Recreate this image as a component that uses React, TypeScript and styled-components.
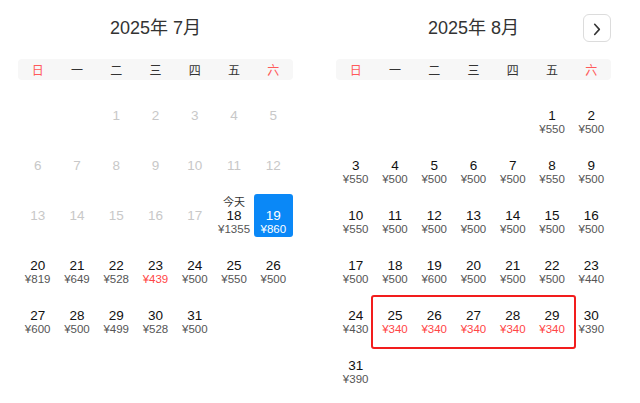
import React from "react";
import styled, { createGlobalStyle } from "styled-components";

const Global = createGlobalStyle`
  html, body { margin: 0; padding: 0; background: #fff; }
  body { font-family: "Liberation Sans", "Noto Sans CJK SC", sans-serif; color: #222; }
`;

const Page = styled.div`
  display: flex;
  gap: 43px;
  padding: 12px 29px 0 18px;
  width: 640px;
  height: 403px;
  box-sizing: border-box;
`;

const Panel = styled.section`
  width: 275px;
  display: flex;
  flex-direction: column;
`;

const Header = styled.div`
  display: grid;
  grid-template-columns: 28px 1fr 28px;
  align-items: center;
  height: 29px;
`;

const Title = styled.h2`
  grid-column: 2;
  margin: 0;
  text-align: center;
  font-family: "Liberation Sans", "Noto Sans CJK SC", sans-serif;
  font-weight: 400;
  font-size: 18px;
  color: #333;
  line-height: 29px;
  padding-top: 2px;
`;

const NextButton = styled.button`
  grid-column: 3;
  width: 28px;
  height: 28px;
  padding: 0;
  border: 1px solid #dcdcdc;
  border-radius: 6px;
  background: #fff;
  display: flex;
  align-items: center;
  justify-content: center;
`;

const WeekBar = styled.div`
  margin-top: 18px;
  height: 21px;
  background: #f7f7f7;
  border-radius: 4px;
  display: grid;
  grid-template-columns: repeat(7, 1fr);
  align-items: center;
`;

const WeekDay = styled.span<{ $weekend: boolean }>`
  text-align: center;
  font-size: 12px;
  font-family: "Noto Sans CJK SC", sans-serif;
  color: ${(p) => (p.$weekend ? "#ff5a5a" : "#333")};
  line-height: 21px;
`;

const Grid = styled.div`
  margin-top: 14px;
  display: grid;
  grid-template-columns: repeat(7, 1fr);
  grid-auto-rows: 43px;
  row-gap: 7px;
`;

const Cell = styled.div<{ $selected: boolean }>`
  display: flex;
  flex-direction: column;
  align-items: center;
  padding-top: 1px;
  box-sizing: border-box;
  border-radius: 3px;
  background: ${(p) => (p.$selected ? "#0a88f7" : "transparent")};
  color: ${(p) => (p.$selected ? "#fff" : "inherit")};
`;

const Label = styled.span`
  height: 12px;
  margin-bottom: 2px;
  line-height: 12px;
  font-size: 11px;
  font-family: "Noto Sans CJK SC", sans-serif;
  color: #333;
`;

const Num = styled.span<{ $past: boolean; $selected: boolean }>`
  height: 14px;
  line-height: 14px;
  font-size: 13.5px;
  color: ${(p) => (p.$selected ? "#fff" : p.$past ? "#c8c8c8" : "#111")};
`;

const Price = styled.span<{ $red: boolean; $selected: boolean }>`
  height: 13px;
  line-height: 13px;
  font-size: 11.5px;
  color: ${(p) => (p.$selected ? "#fff" : p.$red ? "#ff4545" : "#555")};
`;

const Highlight = styled.div`
  grid-row: 5;
  grid-column: 2 / 7;
  margin: 1px -4px -12px -4px;
  border: 2px solid #f21d1d;
  border-radius: 3px;
  pointer-events: none;
`;

type Day = {
  d: number;
  price?: number;
  red?: boolean;
  past?: boolean;
  today?: boolean;
  selected?: boolean;
};

const WEEK = ["日", "一", "二", "三", "四", "五", "六"];

const july: Day[] = [
  ...Array.from({ length: 17 }, (_, i) => ({ d: i + 1, past: true })),
  { d: 18, price: 1355, today: true },
  { d: 19, price: 860, selected: true },
  { d: 20, price: 819 },
  { d: 21, price: 649 },
  { d: 22, price: 528 },
  { d: 23, price: 439, red: true },
  { d: 24, price: 500 },
  { d: 25, price: 550 },
  { d: 26, price: 500 },
  { d: 27, price: 600 },
  { d: 28, price: 500 },
  { d: 29, price: 499 },
  { d: 30, price: 528 },
  { d: 31, price: 500 },
];

const augPrices = [
  550, 500, 550, 500, 500, 500, 500, 550, 500, 550, 500, 500, 500, 500, 500,
  500, 500, 500, 600, 500, 500, 500, 440, 430, 340, 340, 340, 340, 340, 390,
  390,
];
const august: Day[] = augPrices.map((p, i) => ({
  d: i + 1,
  price: p,
  red: i + 1 >= 25 && i + 1 <= 29,
}));

const Chevron = () => (
  <svg width="28" height="28" viewBox="0 0 28 28" fill="none">
    <polyline
      points="11.5,10 16.5,15.5 11.5,21"
      stroke="#333"
      strokeWidth="1.7"
      strokeLinecap="round"
      strokeLinejoin="round"
    />
  </svg>
);

function Month({
  title,
  startCol,
  days,
  showNext,
  highlight,
}: {
  title: string;
  startCol: number;
  days: Day[];
  showNext?: boolean;
  highlight?: boolean;
}) {
  return (
    <Panel>
      <Header>
        <Title>{title}</Title>
        {showNext && (
          <NextButton aria-label="next">
            <Chevron />
          </NextButton>
        )}
      </Header>
      <WeekBar>
        {WEEK.map((w, i) => (
          <WeekDay key={w} $weekend={i === 0 || i === 6}>
            {w}
          </WeekDay>
        ))}
      </WeekBar>
      <Grid>
        {days.map((day, i) => {
          const idx = startCol + i;
          const col = (idx % 7) + 1;
          const row = Math.floor(idx / 7) + 1;
          const sel = !!day.selected;
          return (
            <Cell
              key={day.d}
              $selected={sel}
              style={{ gridColumn: col, gridRow: row }}
            >
              <Label>{day.today ? "今天" : ""}</Label>
              <Num $past={!!day.past} $selected={sel}>
                {day.d}
              </Num>
              <Price $red={!!day.red} $selected={sel}>
                {day.price !== undefined ? `¥${day.price}` : ""}
              </Price>
            </Cell>
          );
        })}
        {highlight && <Highlight />}
      </Grid>
    </Panel>
  );
}

export default function App() {
  return (
    <>
      <Global />
      <Page>
        <Month title="2025年 7月" startCol={2} days={july} />
        <Month title="2025年 8月" startCol={5} days={august} showNext highlight />
      </Page>
    </>
  );
}
